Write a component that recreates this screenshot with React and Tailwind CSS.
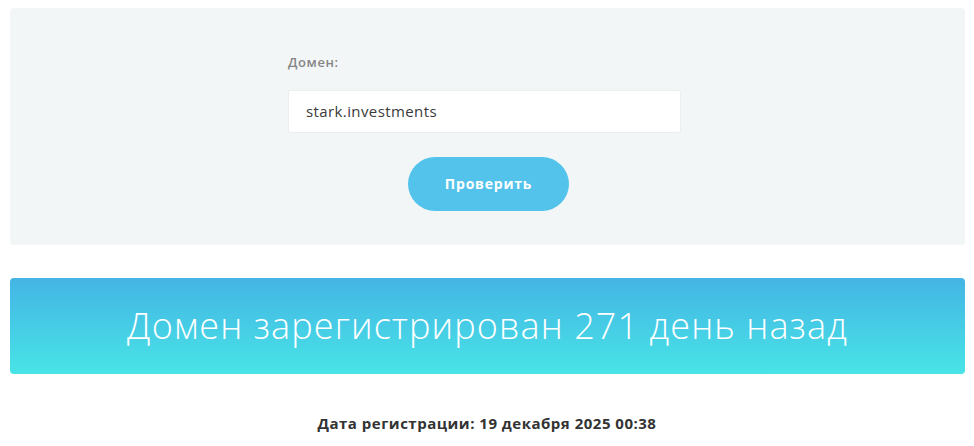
export default function App() {
  return (
    <div className="min-h-[446px] bg-white pt-[8px]" style={{ fontFamily: '"Open Sans", "Noto Sans", sans-serif' }}>
      <div className="mx-[10px] mr-[9px] rounded-[4px] bg-[#f3f6f7] pt-[45px] pb-[34px]">
        <div className="mx-auto w-[393px] -translate-x-[3px]">
          <label className="block text-[13px] font-semibold tracking-[0.6px] text-[#858585]">Домен:</label>
          <div className="mt-[17px] flex h-[43px] items-center rounded-[2px] border border-[#eceff0] bg-white px-[17px] text-[15px] tracking-[0.4px] text-[#3a3a3a]">
            stark.investments
          </div>
          <div className="mt-[24px] flex justify-center">
            <button className="h-[54px] w-[161px] translate-x-[4px] rounded-full bg-[#53c3ec] text-[14px] font-bold tracking-[0.8px] text-white">
              Проверить
            </button>
          </div>
        </div>
      </div>

      <div className="mx-[10px] mr-[9px] mt-[33px] flex h-[96px] items-center justify-center rounded-[4px] bg-gradient-to-b from-[#44b4e4] to-[#48e4e6]">
        <span className="text-[36px] font-light tracking-[1.1px] text-white">Домен зарегистрирован 271 день назад</span>
      </div>

      <div className="mt-[38px] text-center text-[15px] font-bold tracking-[0.5px] text-[#333]">
        Дата регистрации: 19 декабря 2025 00:38
      </div>
    </div>
  );
}
